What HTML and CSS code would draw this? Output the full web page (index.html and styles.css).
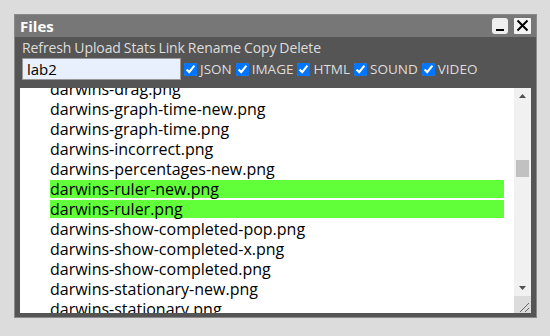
FILE: index.html
```html
<!DOCTYPE html>
<html lang="en">
<head>
    <meta charset="UTF-8">
    <meta name="viewport" content="width=device-width, initial-scale=1.0">
    <title>Files</title>
    <link rel="stylesheet" href="styles.css">
</head>
<body>
    <div class="window">
        <div class="titlebar">
            <span class="title">Files</span>
            <span class="win-btn minimize">
                <svg width="16" height="16" viewBox="0 0 16 16"><rect x="4" y="11" width="8" height="2" fill="#000"/></svg>
            </span>
            <span class="win-btn close">
                <svg width="17" height="16" viewBox="0 0 17 16"><path d="M3.5 2.5 L13.5 12.5 M13.5 2.5 L3.5 12.5" stroke="#000" stroke-width="2"/></svg>
            </span>
        </div>
        <div class="toolbar">
            <a href="#">Refresh</a>
            <a href="#">Upload</a>
            <a href="#">Stats</a>
            <a href="#">Link</a>
            <a href="#">Rename</a>
            <a href="#">Copy</a>
            <a href="#">Delete</a>
        </div>
        <div class="filters">
            <input type="text" class="search" value="lab2">
            <label><input type="checkbox" checked>JSON</label>
            <label><input type="checkbox" checked>IMAGE</label>
            <label><input type="checkbox" checked>HTML</label>
            <label><input type="checkbox" checked>SOUND</label>
            <label><input type="checkbox" checked>VIDEO</label>
        </div>
        <div class="file-box">
            <ul class="file-list" id="file-list">
                <li>darwins-drag.png</li>
                <li>darwins-graph-time-new.png</li>
                <li>darwins-graph-time.png</li>
                <li>darwins-incorrect.png</li>
                <li>darwins-percentages-new.png</li>
                <li class="selected">darwins-ruler-new.png</li>
                <li class="selected">darwins-ruler.png</li>
                <li>darwins-show-completed-pop.png</li>
                <li>darwins-show-completed-x.png</li>
                <li>darwins-show-completed.png</li>
                <li>darwins-stationary-new.png</li>
                <li>darwins-stationary.png</li>
            </ul>
            <div class="scrollbar">
                <div class="sb-button">
                    <svg width="17" height="17" viewBox="0 0 17 17"><polygon points="8.5,6 12,10 5,10" fill="#505050"/></svg>
                </div>
                <div class="sb-track">
                    <div class="sb-thumb"></div>
                </div>
                <div class="sb-button">
                    <svg width="17" height="17" viewBox="0 0 17 17"><polygon points="5,7 12,7 8.5,11" fill="#505050"/></svg>
                </div>
                <div class="sb-corner">
                    <svg width="17" height="17" viewBox="0 0 17 17"><path d="M6 16 L15 7 M11 16 L15 12" stroke="#666" stroke-width="1"/></svg>
                </div>
            </div>
        </div>
    </div>

    <script>
        document.addEventListener('DOMContentLoaded', function() {
            var list = document.getElementById('file-list');
            list.scrollTop = 8; // list is scrolled part way into darwins-drag.png
        });
    </script>
</body>
</html>
```

FILE: styles.css
```css
body {
    font-family: "Open Sans", sans-serif;
    background-color: #dcdcdc;
    margin: 0;
    padding: 14px;
}
.window {
    width: 521px;
    height: 302px;
    background-color: #555;
    border: 1px solid #8a8a8a;
    display: flex;
    flex-direction: column;
}
.titlebar {
    height: 22px;
    flex-shrink: 0;
    background-color: #777;
    display: flex;
    align-items: center;
    padding: 0 5px;
    gap: 6px;
}
.title {
    flex: 1;
    color: #fff;
    font-weight: bold;
    font-size: 15px;
}
.win-btn {
    width: 16px;
    height: 16px;
    background-color: #eee;
    border-radius: 3px;
}
.win-btn svg {
    display: block;
}
.close {
    width: 17px;
    border-radius: 1px;
    background-color: #f4f4f4;
}
.toolbar {
    flex-shrink: 0;
    display: flex;
    gap: 3px;
    padding: 0 7px;
    font-size: 14px;
    height: 21px;
    line-height: 21px;
    letter-spacing: -0.1px;
}
.toolbar a {
    color: #ddd;
    text-decoration: none;
}
.filters {
    flex-shrink: 0;
    display: flex;
    align-items: center;
    padding: 0 7px;
    height: 22px;
    font-size: 13.5px;
    color: #ddd;
}
.search {
    width: 159px;
    height: 22px;
    box-sizing: border-box;
    border: 1px solid #999;
    background-color: #e8f0fe;
    padding: 0 4px;
    font-family: "Open Sans", sans-serif;
    font-size: 15px;
    margin: 0 3px 0 0;
}
.filters label {
    display: flex;
    align-items: center;
    margin-right: 4px;
}
.filters input[type="checkbox"] {
    width: 13px;
    height: 13px;
    margin: 0 3px 0 0;
}
.file-box {
    flex: 1;
    min-height: 0;
    display: flex;
    margin: 8px 5px 4px 5px;
    background-color: #fff;
}
.file-list {
    flex: 1;
    margin: 0;
    padding: 0;
    list-style: none;
    overflow: hidden;
    font-size: 16px;
}
.file-list li {
    height: 18px;
    line-height: 18px;
    margin: 0 10px 2px 30px;
    color: #000;
    white-space: nowrap;
}
.file-list li.selected {
    background-color: #60ff3a;
}
.scrollbar {
    width: 17px;
    display: flex;
    flex-direction: column;
    background-color: #f1f1f1;
}
.sb-button svg,
.sb-corner svg {
    display: block;
}
.sb-track {
    flex: 1;
    padding: 0 2px;
}
.sb-thumb {
    height: 17px;
    margin-top: 55px;
    background-color: #c1c1c1;
}
.sb-corner {
    background-color: #dcdcdc;
}
```
